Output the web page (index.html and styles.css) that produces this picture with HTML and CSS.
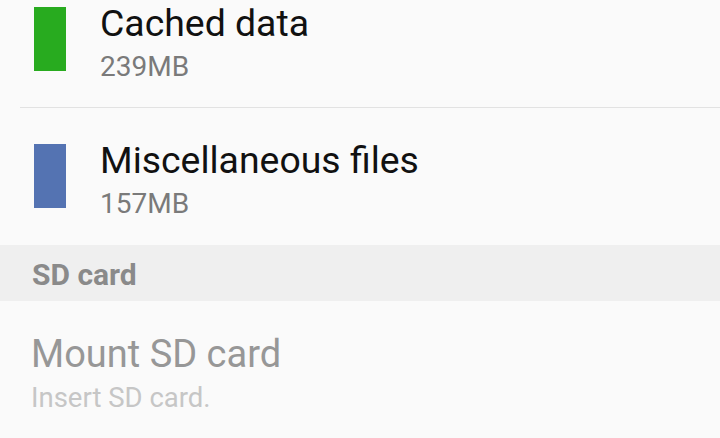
FILE: index.html
```html
<!DOCTYPE html>
<html>
<head>
<meta charset="utf-8">
<link rel="stylesheet" href="styles.css">
</head>
<body>
<div class="list">
  <div class="item">
    <div class="swatch swatch-green"></div>
    <div class="text">
      <div class="title">Cached data</div>
      <div class="subtitle">239MB</div>
    </div>
  </div>
  <div class="item item-last">
    <div class="swatch swatch-blue"></div>
    <div class="text">
      <div class="title">Miscellaneous files</div>
      <div class="subtitle">157MB</div>
    </div>
  </div>
  <div class="section">SD card</div>
  <div class="pref">
    <div class="pref-title">Mount SD card</div>
    <div class="pref-summary">Insert SD card.</div>
  </div>
</div>
</body>
</html>
```
FILE: styles.css
```css
html, body {
  margin: 0;
  padding: 0;
  background: #fafafa;
  font-family: Roboto, "Noto Sans", sans-serif;
  overflow: hidden;
}
.list {
  margin-top: -29px;
  display: flex;
  flex-direction: column;
}
.item {
  display: flex;
  align-items: flex-start;
  margin-left: 20px;
  padding: 30px 0 22px 14px;
  border-bottom: 1px solid #e2e2e2;
}
.item-last {
  border-bottom-color: #fafafa;
}
.swatch {
  width: 32px;
  height: 64px;
  margin-top: 6px;
  flex: none;
}
.swatch-green { background: #28ab1f; }
.swatch-blue { background: #5473b2; }
.text {
  margin-left: 34px;
  display: flex;
  flex-direction: column;
}
.title {
  font-size: 37.4px;
  line-height: 44px;
  color: #111;
}
.subtitle {
  margin-top: 4px;
  font-size: 28px;
  line-height: 36px;
  color: #7a7a7a;
}
.section {
  height: 56px;
  background: #efefef;
  display: flex;
  align-items: center;
  padding-left: 32px;
  padding-top: 2px;
  box-sizing: border-box;
  font-size: 30px;
  font-weight: bold;
  color: #8a8a8a;
}
.pref {
  padding: 31px 0 0 31px;
  display: flex;
  flex-direction: column;
}
.pref-title {
  font-size: 38px;
  line-height: 44px;
  color: #979797;
}
.pref-summary {
  margin-top: 4px;
  font-size: 27.5px;
  line-height: 36px;
  color: #c6c6c6;
}
```
